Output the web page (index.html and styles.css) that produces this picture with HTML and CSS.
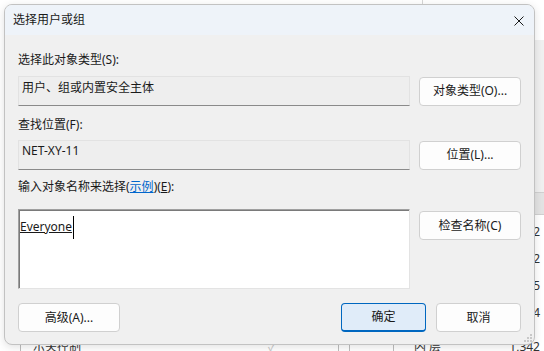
FILE: index.html
```html
<!DOCTYPE html>
<html lang="zh-CN">

<head>
    <meta charset="UTF-8" />
    <meta name="viewport" content="width=device-width, initial-scale=1.0" />
    <title>选择用户或组</title>
    <link rel="stylesheet" href="styles.css">
</head>

<body>
    <div class="screen">
        <!-- 后面的窗口，只露出一点边 -->
        <div class="backdrop">
            <div class="bg-divider"></div>
            <div class="bg-side"></div>
            <div class="bg-header"></div>
            <div class="bg-nums">
                <span>2</span>
                <span>2</span>
                <span>5</span>
                <span>4</span>
            </div>
            <div class="bg-row">
                <span class="bg-line l1"></span>
                <span class="bg-name">示关控制</span>
                <span class="bg-check">&#10003;</span>
                <span class="bg-line l2"></span>
                <span class="bg-line l3"></span>
                <span class="bg-line l4"></span>
                <span class="bg-kind">内 层</span>
                <span class="bg-total">1,342</span>
            </div>
        </div>

        <div class="dialog">
            <div class="titlebar">
                <span class="title">选择用户或组</span>
                <svg class="close" width="10" height="10" viewBox="0 0 10 10">
                    <path d="M0.5 0.5 L9.5 9.5 M9.5 0.5 L0.5 9.5" stroke="#1a1a1a" stroke-width="1" fill="none" />
                </svg>
            </div>

            <div class="content">
                <div class="label">选择此对象类型(S):</div>
                <div class="row">
                    <div class="field">用户、组或内置安全主体</div>
                    <button class="btn">对象类型(O)...</button>
                </div>

                <div class="label gap-11">查找位置(F):</div>
                <div class="row gap-7">
                    <div class="field latin">NET-XY-11</div>
                    <button class="btn">位置(L)...</button>
                </div>

                <div class="label gap-9">输入对象名称来选择(<a class="link" href="#">示例</a>)(<u>E</u>):</div>
                <div class="row top gap-14">
                    <div class="names"><span class="resolved">Everyone</span><span class="caret"></span></div>
                    <button class="btn check">检查名称(C)</button>
                </div>

                <div class="footer">
                    <button class="btn">高级(A)...</button>
                    <div class="actions">
                        <button class="btn small primary">确定</button>
                        <button class="btn small">取消</button>
                    </div>
                </div>
            </div>

            <svg class="grip" width="8" height="8" viewBox="0 0 8 8">
                <rect x="6" y="0" width="2" height="2" fill="#c8c8c8" />
                <rect x="3" y="3" width="2" height="2" fill="#c8c8c8" />
                <rect x="6" y="3" width="2" height="2" fill="#c8c8c8" />
                <rect x="0" y="6" width="2" height="2" fill="#c8c8c8" />
                <rect x="3" y="6" width="2" height="2" fill="#c8c8c8" />
                <rect x="6" y="6" width="2" height="2" fill="#c8c8c8" />
            </svg>
        </div>
    </div>
</body>

</html>
```

FILE: styles.css
```css
html,
body {
    margin: 0;
    padding: 0;
}

body {
    font-family: "Noto Sans", "Noto Sans CJK SC", sans-serif;
    font-size: 12px;
    color: #1a1a1a;
}

.screen {
    position: relative;
    width: 544px;
    height: 351px;
    overflow: hidden;
    background-color: #ffffff;
}

/* 背景窗口 */
.backdrop {
    position: absolute;
    inset: 0;
}

.bg-divider {
    position: absolute;
    left: 422px;
    top: 0;
    width: 1px;
    height: 6px;
    background-color: #d6d6d6;
}

.bg-side {
    position: absolute;
    left: 530px;
    top: 40px;
    width: 14px;
    height: 152px;
    background-color: #f0f0f0;
}

.bg-header {
    position: absolute;
    left: 530px;
    top: 192px;
    width: 14px;
    height: 23px;
    box-sizing: border-box;
    background-color: #e3e3e3;
    border-top: 1px solid #d0d0d0;
    border-bottom: 1px solid #d0d0d0;
}

.bg-nums {
    position: absolute;
    right: 4px;
    top: 223px;
    display: flex;
    flex-flow: column;
    align-items: flex-end;
    gap: 10px;
    line-height: 17px;
    color: #333333;
}

.bg-row {
    position: absolute;
    left: 0;
    right: 0;
    top: 338px;
    height: 16px;
    line-height: 16px;
    color: #333333;
}

.bg-row>span {
    position: absolute;
    top: 1px;
}

.bg-line {
    top: 0;
    width: 1px;
    height: 16px;
    background-color: #bdbdbd;
}

.l1 {
    left: 20px;
}

.l2 {
    left: 338px;
}

.l3 {
    left: 349px;
}

.l4 {
    left: 393px;
}

.bg-name {
    left: 33px;
}

.bg-check {
    left: 268px;
    color: #c8c8c8;
}

.bg-kind {
    left: 414px;
}

.bg-total {
    right: 4px;
}

/* 对话框 */
.dialog {
    position: absolute;
    left: 4px;
    top: 4px;
    width: 531px;
    height: 341px;
    box-sizing: border-box;
    border: 1px solid #c2c2c2;
    border-radius: 8px;
    background-color: #f0f0f0;
    overflow: hidden;
    box-shadow: 0 2px 8px rgba(0, 0, 0, 0.12);
}

.titlebar {
    height: 30px;
    display: flex;
    align-items: center;
    justify-content: space-between;
    padding: 0 10px 0 8px;
    background-color: #eef3f9;
}

.title {
    line-height: 16px;
    padding-top: 0;
}

.close {
    margin-top: 1px;
    margin-right: 0;
}

.content {
    display: flex;
    flex-flow: column;
    padding: 17px 13px 0;
}

.label {
    line-height: 16px;
    height: 16px;
}

.link {
    color: #0066cc;
}

.row {
    display: grid;
    grid-template-columns: 392px 102px;
    column-gap: 9px;
    align-items: center;
    margin-top: 8px;
}

.row.top {
    align-items: start;
}

.gap-7 {
    margin-top: 7px;
}

.gap-9 {
    margin-top: 9px;
}

.gap-11 {
    margin-top: 11px;
}

.gap-14 {
    margin-top: 14px;
}

.field {
    box-sizing: border-box;
    height: 30px;
    padding: 3px 3px 0;
    line-height: 16px;
    background-color: #eeeeee;
    border: 1px solid #e2e2e2;
    border-bottom-color: #8a8a8a;
}

.field.latin {
    padding-top: 2px;
}

.names {
    box-sizing: border-box;
    height: 80px;
    padding: 6px 1px 0;
    background-color: #ffffff;
    border: 1px solid;
    border-color: #a0a0a0 #e3e3e3 #e3e3e3 #a0a0a0;
    box-shadow: inset 1px 1px 0 #7a7a7a;
    line-height: 22px;
    display: flex;
    align-items: flex-start;
}

.resolved {
    text-decoration: underline;
    padding-top: 2px;
    line-height: 18px;
}

.caret {
    display: inline-block;
    width: 1px;
    height: 23px;
    margin-left: 1px;
    background-color: #000000;
}

.btn {
    box-sizing: border-box;
    height: 29px;
    padding: 0;
    border: 1px solid #d0d0d0;
    border-radius: 4px;
    background-color: #fdfdfd;
    font-family: inherit;
    font-size: 12px;
    line-height: 16px;
    color: #1a1a1a;
    width: 102px;
}

.btn.check {
    margin-top: 2px;
}

.btn.small {
    width: 85px;
}

.btn.primary {
    background-color: #e0ecf9;
    border: 1px solid #0067c0;
    border-bottom-width: 2px;
}

.footer {
    display: flex;
    justify-content: space-between;
    margin-top: 14px;
}

.actions {
    display: flex;
    gap: 10px;
}

.grip {
    position: absolute;
    right: 2px;
    bottom: 2px;
}
```
